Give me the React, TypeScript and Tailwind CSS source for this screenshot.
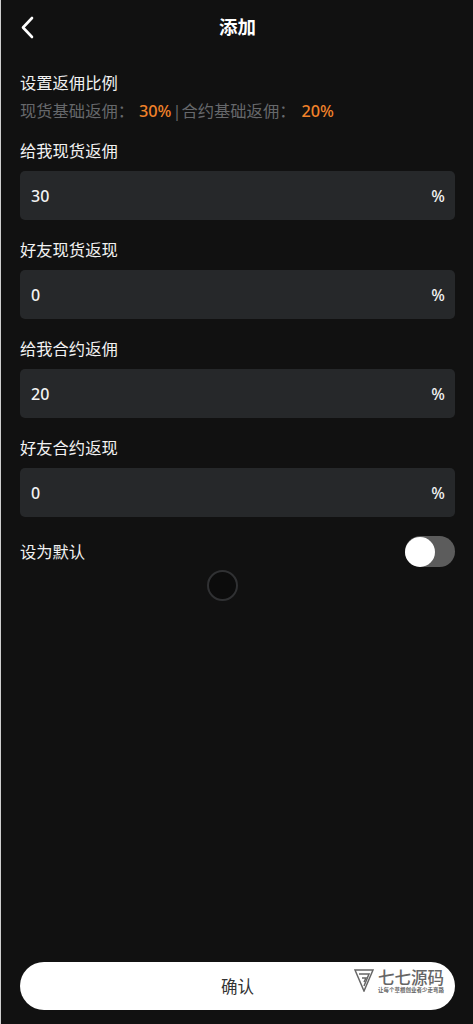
const font = { fontFamily: '"Noto Sans","Noto Sans CJK SC",sans-serif' };

function Field({ label, value }: { label: string; value: string }) {
  return (
    <div className="flex flex-col">
      <div className="h-[21px] text-[16.3px] leading-[21px] text-[#f2f2f2]">{label}</div>
      <div className="mt-[9px] flex h-[49px] items-center justify-between rounded-[5px] bg-[#26282a] pl-[11px] pr-[10px] text-[16px] font-medium text-[#f2f2f2]">
        <span>{value}</span>
        <span>%</span>
      </div>
    </div>
  );
}

export default function App() {
  return (
    <div style={font} className="relative flex h-[1024px] w-[473px] flex-col overflow-hidden border-l border-[#cfcfcf] bg-[#111111] pl-[19px] pr-[18px]">
      <header className="relative flex h-[55px] shrink-0 items-center justify-center">
        <svg className="absolute left-0 top-[15px]" width="16" height="24" viewBox="0 0 16 24" fill="none" stroke="#fff" strokeWidth="2.6" strokeLinecap="round" strokeLinejoin="round">
          <path d="M12 3 3 12.5 12 22" />
        </svg>
        <h1 className="pb-[2px] text-[18.5px] font-semibold text-white">添加</h1>
      </header>
      <div className="mt-[18px] h-[21px] text-[16.3px] leading-[21px] text-[#f2f2f2]">设置返佣比例</div>
      <div className="mt-[7px] flex h-[21px] items-center text-[16.3px] leading-[21px] text-[#66686b]">
        <span>现货基础返佣：</span>
        <span className="ml-[5px] font-medium text-[#f0822a]">30%</span>
        <span className="ml-[1px]">|</span>
        <span>合约基础返佣：</span>
        <span className="ml-[6px] font-medium text-[#f0822a]">20%</span>
      </div>
      <div className="mt-[19px] flex flex-col gap-[20px]">
        <Field label="给我现货返佣" value="30" />
        <Field label="好友现货返现" value="0" />
        <Field label="给我合约返佣" value="20" />
        <Field label="好友合约返现" value="0" />
      </div>
      <div className="mt-[19px] flex h-[31px] items-center justify-between">
        <span className="pt-[1px] text-[16.3px] text-[#f2f2f2]">设为默认</span>
        <div className="flex h-[31px] w-[50px] items-center rounded-full bg-[#5c5c5c]">
          <div className="h-[30px] w-[30px] rounded-full bg-white" />
        </div>
      </div>
      <div className="ml-[187px] mt-[3px] h-[31px] w-[31px] rounded-full border-2 border-[#303133] bg-[#0c0c0c]" />
      <button className="mb-[14px] mt-auto h-[48px] w-full shrink-0 rounded-full bg-white pt-[3px] text-[16.5px] text-[#333]">确认</button>
      <div className="absolute left-[353px] top-[968px] flex items-start gap-[4px] text-[#666]">
        <svg width="20" height="24" viewBox="0 0 20 24" fill="none" stroke="#666" strokeWidth="1.5">
          <path d="M1 2H19L10 23Z" />
          <path d="M5 6H15L10 18" />
          <path d="M8 10H12L10 14" />
        </svg>
        <div className="flex flex-col items-start">
          <span className="h-[19px] text-[16.5px] font-medium leading-[19px]" style={{ fontFamily: '"Noto Sans CJK SC",serif' }}>七七源码</span>
          <span className="h-[6px] whitespace-nowrap text-[5.5px] font-bold leading-[6px]">让每个草根创业者少走弯路</span>
        </div>
      </div>
    </div>
  );
}
